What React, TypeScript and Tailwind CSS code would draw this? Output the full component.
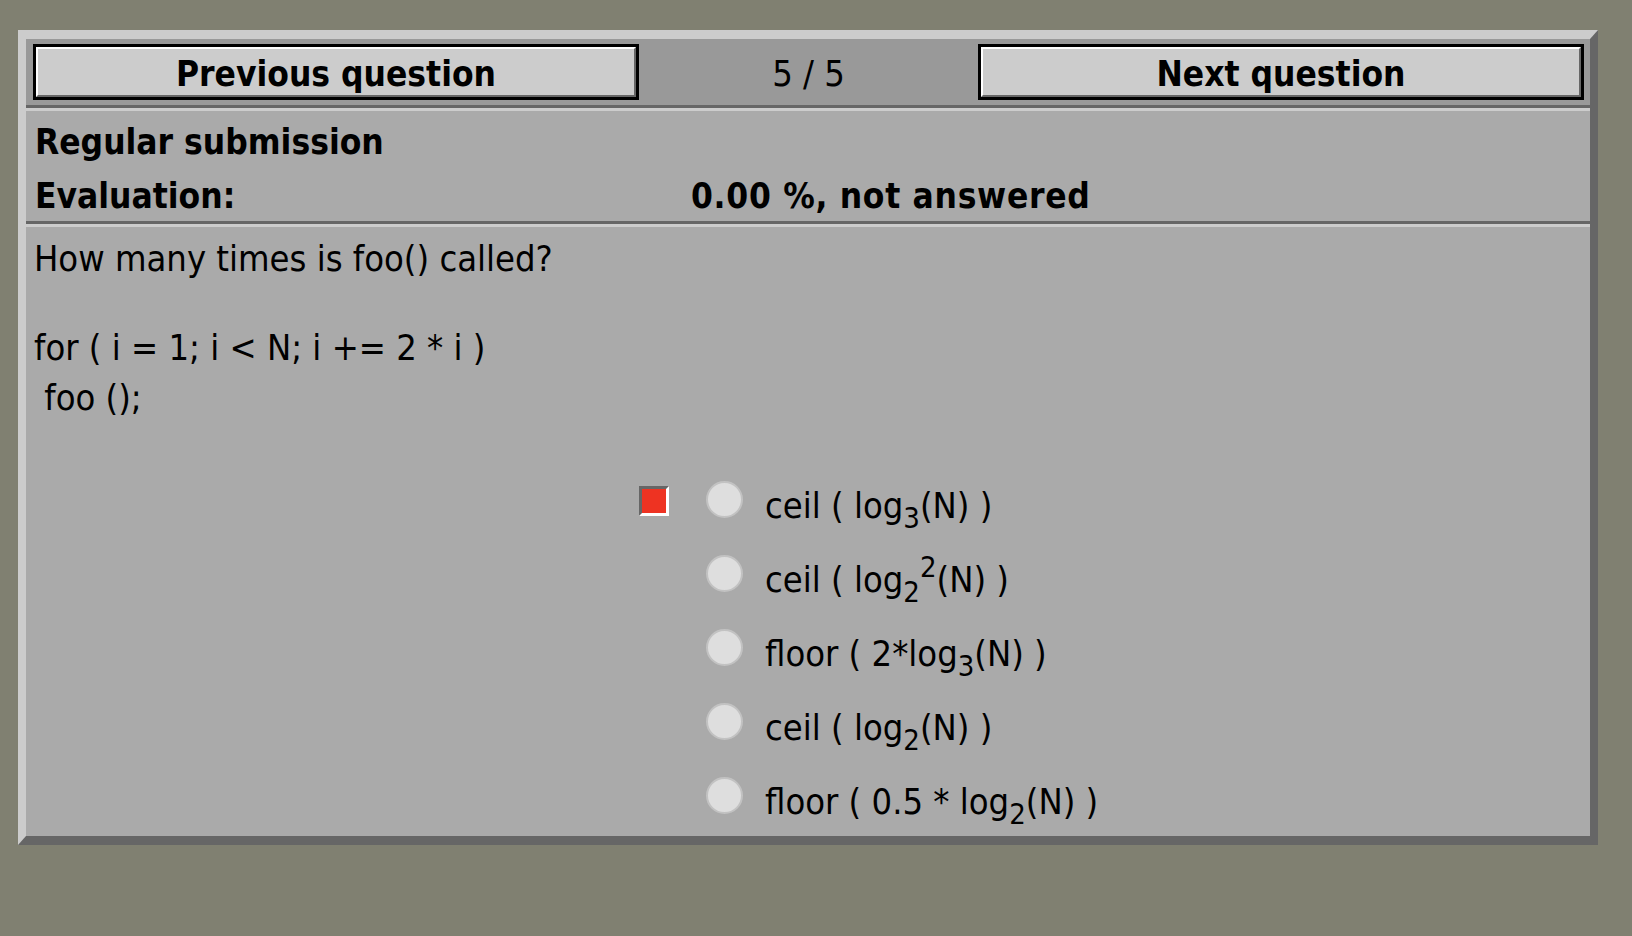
import React from "react";

const font = "font-['DejaVu_Sans_Condensed','DejaVu_Sans',sans-serif]";

function NavButton({ label }: { label: string }) {
  return (
    <div className="h-[56px] border-[3px] border-black">
      <div className="flex h-full items-center justify-center border-2 border-t-white border-l-white border-b-[#666666] border-r-[#666666] bg-[#cccccc] pt-[4px] text-[35px] font-bold text-black">
        {label}
      </div>
    </div>
  );
}

function Radio() {
  return <div className="h-[37px] w-[37px] rounded-full border-2 border-[#c2c2c2] bg-[#dedede]" />;
}

type Opt = { content: React.ReactNode; marked?: boolean };

const Sub = ({ c }: { c: string }) => (
  <sub className="relative top-[2px] align-sub text-[29px]">{c}</sub>
);
const Sup = ({ c }: { c: string }) => (
  <sup className="relative top-[-2px] align-super text-[29px]">{c}</sup>
);

const options: Opt[] = [
  {
    marked: true,
    content: (
      <>
        ceil ( log<Sub c="3" />(N) )
      </>
    ),
  },
  {
    content: (
      <>
        ceil ( log<Sub c="2" />
        <Sup c="2" />(N) )
      </>
    ),
  },
  {
    content: (
      <>
        floor ( 2*log<Sub c="3" />(N) )
      </>
    ),
  },
  {
    content: (
      <>
        ceil ( log<Sub c="2" />(N) )
      </>
    ),
  },
  {
    content: (
      <>
        floor ( 0.5 * log<Sub c="2" />(N) )
      </>
    ),
  },
];

export default function App() {
  return (
    <div className={`min-h-[936px] w-full bg-[#808071] pt-[30px] pl-[18px] text-black ${font}`}>
      <div className="w-[1580px] border-[8px] border-t-[9px] border-b-[9px] border-t-[#cccccc] border-l-[#cccccc] border-b-[#666666] border-r-[#666666]">
        {/* header */}
        <div className="grid h-[69px] grid-cols-[606px_1fr_606px] items-center border-b-[3px] border-b-[#666666] bg-[#999999] pl-[7px] pr-[6px]">
          <NavButton label="Previous question" />
          <div className="pt-[4px] text-center text-[36px] leading-none">5 / 5</div>
          <NavButton label="Next question" />
        </div>
        {/* info */}
        <div className="h-[116px] border-t-[3px] border-b-[3px] border-t-[#cccccc] border-b-[#666666] bg-[#aaaaaa] pl-[9px] pt-[4px] text-[35px] font-bold">
          <div className="flex h-[55px] items-center">Regular submission</div>
          <div className="grid h-[51px] grid-cols-[656px_1fr] items-center">
            <div>Evaluation:</div>
            <div className="tracking-[0.7px]">0.00 %, not answered</div>
          </div>
        </div>
        {/* question */}
        <div className="h-[612px] border-t-[3px] border-t-[#cccccc] bg-[#aaaaaa] pl-[8px] pt-[7px] text-[36px]">
          <div className="leading-[50px]">How many times is foo() called?</div>
          <div className="mt-[39px] whitespace-pre leading-[50px]">
            {"for ( i = 1; i < N; i += 2 * i )\n foo ();"}
          </div>
          <div className="ml-[605px] mt-[39px] flex flex-col">
            {options.map((o, i) => (
              <div key={i} className="flex h-[74px] items-center">
                <div className="flex w-[67px] items-center">
                  {o.marked && (
                    <div className="mt-[4px] h-[30px] w-[30px] border-[3px] border-t-[#666666] border-l-[#666666] border-b-white border-r-white bg-[#ee3322]" />
                  )}
                </div>
                <Radio />
                <div className="ml-[22px] whitespace-pre pt-[14px] leading-[42px]">{o.content}</div>
              </div>
            ))}
          </div>
        </div>
      </div>
    </div>
  );
}
